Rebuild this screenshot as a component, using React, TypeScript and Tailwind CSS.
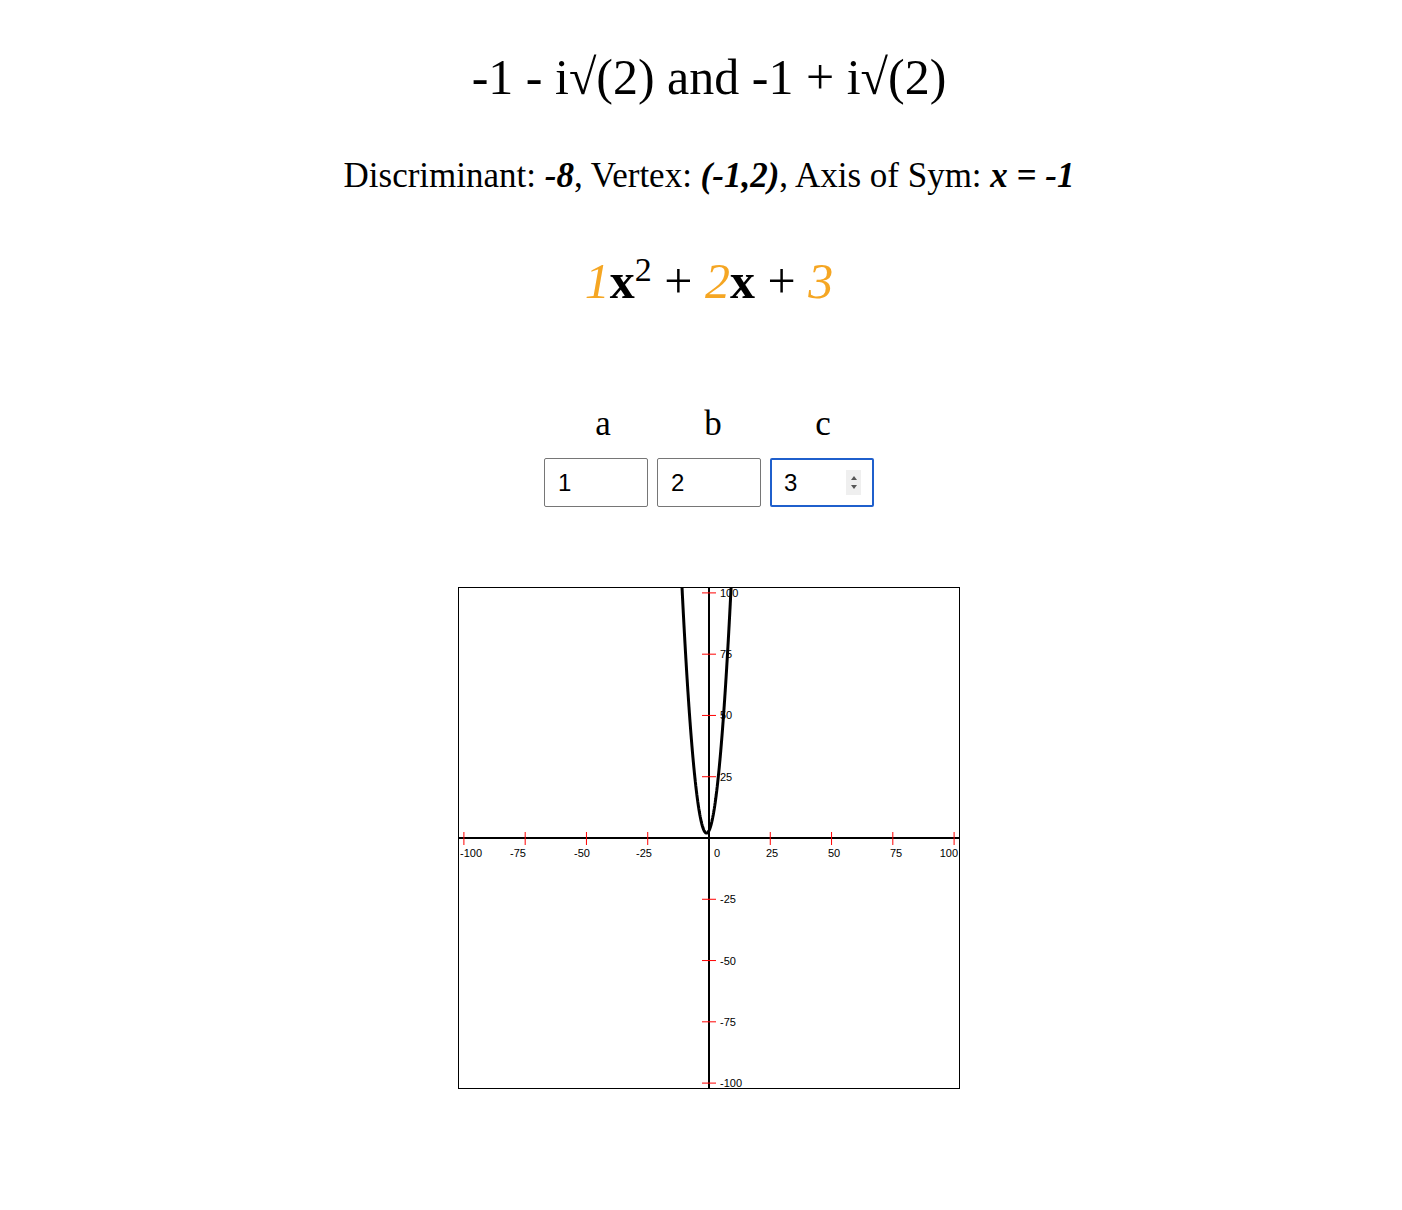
import React from 'react';

const ORANGE = '#f5a623';
const SIZE = 500;
const CENTER = 250;
const SCALE = 250 / 102;

const toX = (x: number) => CENTER + x * SCALE;
const toY = (y: number) => CENTER - y * SCALE;

const xLabels: { v: number; x: number; anchor: 'start' | 'middle' | 'end' }[] = [
  { v: -100, x: 1, anchor: 'start' },
  { v: -75, x: 51, anchor: 'start' },
  { v: -50, x: 115, anchor: 'start' },
  { v: -25, x: 177, anchor: 'start' },
  { v: 0, x: 255, anchor: 'start' },
  { v: 25, x: 313, anchor: 'middle' },
  { v: 50, x: 375, anchor: 'middle' },
  { v: 75, x: 437, anchor: 'middle' },
  { v: 100, x: 499, anchor: 'end' },
];

const ticks = [-100, -75, -50, -25, 25, 50, 75, 100];

const Graph: React.FC<{ a: number; b: number; c: number }> = ({ a, b, c }) => {
  // sample the parabola, keep only the part inside the visible window
  const pts: string[] = [];
  for (let x = -102; x <= 102; x += 0.02) {
    const y = a * x * x + b * x + c;
    if (y <= 103 && y >= -103) pts.push(`${toX(x).toFixed(2)},${toY(y).toFixed(2)}`);
  }

  return (
    <div className="border border-black w-[502px] h-[502px]">
      <svg width={SIZE} height={SIZE} viewBox={`0 0 ${SIZE} ${SIZE}`} className="block">
        {/* axes */}
        <line x1={0} y1={CENTER} x2={SIZE} y2={CENTER} stroke="black" strokeWidth={2} />
        <line x1={CENTER} y1={0} x2={CENTER} y2={SIZE} stroke="black" strokeWidth={2} />

        {/* ticks */}
        {ticks.map((t) => (
          <g key={t}>
            <line x1={toX(t)} y1={CENTER - 6} x2={toX(t)} y2={CENTER + 7} stroke="red" strokeWidth={1} />
            <line x1={CENTER - 7} y1={toY(t)} x2={CENTER + 7} y2={toY(t)} stroke="red" strokeWidth={1} />
          </g>
        ))}

        {/* curve */}
        <polyline points={pts.join(' ')} fill="none" stroke="black" strokeWidth={3} strokeLinejoin="round" />

        {/* labels */}
        <g fontFamily="'Liberation Sans', Arial, sans-serif" fontSize={11} fill="black">
          {xLabels.map((l) => (
            <text key={l.v} x={l.x} y={269} textAnchor={l.anchor}>
              {l.v}
            </text>
          ))}
          {ticks.map((t) => (
            <text key={t} x={261} y={toY(t) + 4}>
              {t}
            </text>
          ))}
        </g>
      </svg>
    </div>
  );
};

const NumberBox: React.FC<{ value: number; focused?: boolean }> = ({ value, focused }) => (
  <div
    className={
      focused
        ? 'relative w-[104px] h-[49px] rounded-[2px] border-2 border-[#1f5fcc] bg-white flex items-center pl-[12px]'
        : 'relative w-[104px] h-[49px] rounded-[2px] border border-[#767676] bg-white flex items-center pl-[13px]'
    }
  >
    <span className="text-[24px] text-black font-['Liberation_Sans',Arial,sans-serif]">{value}</span>
    {focused && (
      <div className="absolute right-[11px] top-[10px] w-[15px] h-[25px] bg-[#efefef] flex flex-col items-center justify-center gap-[5px]">
        <div className="w-0 h-0 border-l-[3px] border-r-[3px] border-b-[4px] border-l-transparent border-r-transparent border-b-[#555]" />
        <div className="w-0 h-0 border-l-[3px] border-r-[3px] border-t-[4px] border-l-transparent border-r-transparent border-t-[#555]" />
      </div>
    )}
  </div>
);

export default function App() {
  const a = 1;
  const b = 2;
  const c = 3;

  return (
    <div className="min-h-[1210px] bg-white pl-4 font-['Liberation_Serif','Times_New_Roman',serif] text-black">
      <div className="flex flex-col items-center pt-[50px]">
        <h1 className="text-[50px] leading-[55px]">-1 - i√(2) and -1 + i√(2)</h1>

        <p className="mt-[51px] text-[35px] leading-[40px]">
          Discriminant: <b><i>-8</i></b>, Vertex: <b><i>(-1,2)</i></b>, Axis of Sym: <b><i>x = -1</i></b>
        </p>

        <div className="mt-[58px] text-[50px] leading-[55px]">
          <i style={{ color: ORANGE }}>{a}</i>
          <b>x</b>
          <span className="relative -top-[17px] text-[34px]">2</span> +{' '}
          <i style={{ color: ORANGE }}>{b}</i>
          <b>x</b> + <i style={{ color: ORANGE }}>{c}</i>
        </div>

        <div className="mt-[90px] flex pl-[8px] text-[35px] leading-[40px]">
          <div className="w-[110px] text-center">a</div>
          <div className="w-[110px] text-center">b</div>
          <div className="w-[110px] text-center">c</div>
        </div>

        <div className="mt-[14px] flex gap-[9px]">
          <NumberBox value={a} />
          <NumberBox value={b} />
          <NumberBox value={c} focused />
        </div>

        <div className="mt-[80px]">
          <Graph a={a} b={b} c={c} />
        </div>
      </div>
    </div>
  );
}
